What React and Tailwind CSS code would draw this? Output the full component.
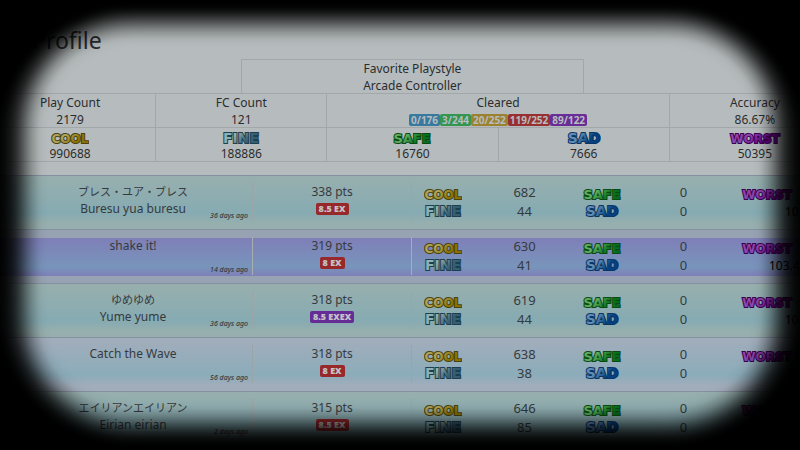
const LOGOS = {
  COOL: { light: '#b0a45c', dark: '#8c7300', edge: '#4a4210', w: 38, size: 12 },
  FINE: { light: '#8fb0b6', dark: '#365f70', edge: '#1b3f4e', w: 38, size: 14 },
  SAFE: { light: '#62ad5f', dark: '#05721a', edge: '#0b4a14', w: 40, size: 13 },
  SAD: { light: '#5f8fb6', dark: '#064080', edge: '#0a3463', w: 34, size: 14 },
  WORST: { light: '#8f45ab', dark: '#650083', edge: '#3c004e', w: 52, size: 12 },
};

function Logo({ name }) {
  const l = LOGOS[name];
  return (
    <svg width={l.w} height="14" viewBox={`0 0 ${l.w} 14`} className="block" role="img" aria-label={name}>
      <defs>
        <linearGradient id={`fill-${name}`} x1="0" y1="0" x2="1" y2="0.4">
          <stop offset="0" stopColor={l.light} />
          <stop offset="0.4" stopColor={l.light} />
          <stop offset="0.8" stopColor={l.dark} />
        </linearGradient>
      </defs>
      <text
        x={l.w / 2}
        y="12"
        textAnchor="middle"
        fontFamily="DejaVu Sans, sans-serif"
        fontWeight="700"
        fontSize={l.size}
        fill={`url(#fill-${name})`}
        stroke={l.edge}
        strokeWidth="2"
        strokeLinejoin="miter"
        paintOrder="stroke"
      >
        {name}
      </text>
    </svg>
  );
}

const cleared = [
  ['0/176', 'bg-[#38799f]'],
  ['3/244', 'bg-[#349650]'],
  ['20/252', 'bg-[#9a8230]'],
  ['119/252', 'bg-[#983032]'],
  ['89/122', 'bg-[#692d98]'],
];

const totals = [
  ['COOL', '990688'],
  ['FINE', '188886'],
  ['SAFE', '16760'],
  ['SAD', '7666'],
  ['WORST', '50395'],
];

const TEAL = 'bg-[linear-gradient(#97afae,#86abb2_68%,#97afae_88%)]';
const PALE = 'bg-[linear-gradient(#a2adbb,#8bacba_68%,#a2adbb_88%)]';
const VIOLET =
  'bg-[linear-gradient(#97a3b3_7px,#7f7fb8_7px,#7895bb_36px,#7f7fb8_45px,#97a3b3_45px)]';
const RED = 'bg-[#98292b]';
const PURPLE = 'bg-[#652c96]';

const scores = [
  { title: 'ブレス・ユア・ブレス', sub: 'Buresu yua buresu', ago: '36 days ago', pts: 338, level: '8.5 EX', color: RED, cool: 682, fine: 44, pct: '10', row: TEAL },
  { title: 'shake it!', sub: '', ago: '14 days ago', pts: 319, level: '8 EX', color: RED, cool: 630, fine: 41, pct: '103.4', row: VIOLET, strong: true },
  { title: 'ゆめゆめ', sub: 'Yume yume', ago: '36 days ago', pts: 318, level: '8.5 EXEX', color: PURPLE, cool: 619, fine: 44, pct: '10', row: TEAL },
  { title: 'Catch the Wave', sub: '', ago: '56 days ago', pts: 318, level: '8 EX', color: RED, cool: 638, fine: 38, pct: '', row: PALE },
  { title: 'エイリアンエイリアン', sub: 'Eirian eirian', ago: '2 days ago', pts: 315, level: '8.5 EX', color: RED, cool: 646, fine: 85, pct: '', row: TEAL },
];

function Pair({ top, bottom, a, b }) {
  return (
    <div className="flex h-[38px] text-[13px] leading-[19px]">
      <div className="flex w-[62px] flex-col items-center pt-1">
        <div className="h-[19px]"><Logo name={top} /></div>
        <div className="h-[19px]"><Logo name={bottom} /></div>
      </div>
      <div className="flex-1 pl-1">
        <div>{a}</div>
        <div>{b}</div>
      </div>
    </div>
  );
}

function ScoreRow({ s }) {
  const line = s.strong ? 'border-[#a8adb0]' : 'border-[#9ba4a6]';
  return (
    <tr className={`border-t border-[#8590a0] ${s.row}`}>
      <td className="pt-[7px] pb-2 pl-[30px]">
        <div className={`relative h-[38px] border-r leading-[17px] ${line}`}>
          <div className={/^[a-z]/i.test(s.title) ? 'text-[12px] leading-[17px]' : 'text-[11px] leading-[17px]'}>{s.title}</div>
          <div>{s.sub}</div>
          <span className="absolute right-1 bottom-0 text-[7px] leading-[10px] font-medium italic">{s.ago}</span>
        </div>
      </td>
      <td className="pt-[7px] pb-2">
        <div className={`h-[38px] border-r leading-[17px] ${line}`}>
          <div>{s.pts} pts</div>
          <div className="flex h-[18px] items-center justify-center">
            <span className={`h-3 rounded-[2px] px-[3px] font-['Open_Sans',sans-serif] text-[9px] leading-3 font-extrabold text-[#c3c3c8] ${s.color}`}>{s.level}</span>
          </div>
        </div>
      </td>
      <td className="pt-[7px] pb-2"><Pair top="COOL" bottom="FINE" a={s.cool} b={s.fine} /></td>
      <td className="pt-[7px] pb-2"><Pair top="SAFE" bottom="SAD" a={0} b={0} /></td>
      <td className="pt-[7px] pb-2">
        <div className="h-[38px] pt-1 pl-[11px] text-left">
          <div className="h-[15px]"><Logo name="WORST" /></div>
          <div className={`text-[12px] leading-[19px] text-black ${s.strong ? 'pl-7' : 'pl-11'}`}>{s.pct}</div>
        </div>
      </td>
    </tr>
  );
}

export default function App() {
  return (
    <div className="relative h-screen overflow-hidden bg-[#b6bcbd] font-['Noto_Sans','Noto_Sans_CJK_JP',sans-serif] text-[12px] text-[#2b2c2e]">
      <div className="-ml-4 w-[calc(100%+57px)]">
        <h1 className="pt-6 pb-[3px] pl-12 text-[23px] leading-8">Profile</h1>

        <table className="w-full table-fixed border-collapse text-center leading-[17px] [&_td]:border-[#a2a7aa] [&_td]:p-0">
          <colgroup>
            {Array.from({ length: 10 }, (_, i) => <col key={i} className="w-[10%]" />)}
          </colgroup>
          <tbody>
            <tr className="h-[34px]">
              <td colSpan={3} />
              <td colSpan={4} className="border">
                <div className="h-[17px]">Favorite Playstyle</div>
                <div className="h-4">Arcade Controller</div>
              </td>
              <td colSpan={3} />
            </tr>
            <tr className="h-[34px]">
              <td colSpan={2} className="border">
                <div className="h-[17px]">Play Count</div>
                <div className="h-4">2179</div>
              </td>
              <td colSpan={2} className="border">
                <div className="h-[17px]">FC Count</div>
                <div className="h-4">121</div>
              </td>
              <td colSpan={4} className="border">
                <div className="h-[17px]">Cleared</div>
                <div className="flex h-4 items-center justify-center pt-0.5">
                  {cleared.map(([t, c]) => (
                    <span key={t} className={`h-3 rounded-[2px] px-0.5 text-[10px] leading-3 font-bold text-[#b8bcbe] ${c}`}>{t}</span>
                  ))}
                </div>
              </td>
              <td colSpan={2} className="border">
                <div className="h-[17px]">Accuracy</div>
                <div className="h-4">86.67%</div>
              </td>
            </tr>
            <tr className="h-[34px]">
              {totals.map(([name, n]) => (
                <td key={name} colSpan={2} className="border">
                  <div className="flex h-[17px] items-end justify-center"><Logo name={name} /></div>
                  <div className="h-4 leading-[18px]">{n}</div>
                </td>
              ))}
            </tr>
          </tbody>
        </table>

        <table className="mt-[13px] w-full table-fixed border-collapse text-center text-[#363a3e]">
          <colgroup>
            <col className="w-[31.4%]" />
            <col className="w-[18.55%]" />
            <col className="w-[18.55%]" />
            <col className="w-[18.55%]" />
            <col />
          </colgroup>
          <tbody>
            {scores.map((s) => <ScoreRow key={s.title} s={s} />)}
            <tr className="h-8 border-t border-[#8590a0]"><td colSpan={5} /></tr>
          </tbody>
        </table>
      </div>

      <div className="pointer-events-none absolute -inset-x-[100px] -top-[100px] -bottom-[97px] rounded-[230px] shadow-[inset_0_0_20px_124px_rgba(0,0,0,0.94),inset_0_0_3px_137px_rgba(0,0,0,0.03)]" />
      <div className="pointer-events-none absolute -inset-x-[105px] -inset-y-[98px] rounded-[235px] shadow-[inset_0_0_8px_107px_#000]" />
    </div>
  );
}
